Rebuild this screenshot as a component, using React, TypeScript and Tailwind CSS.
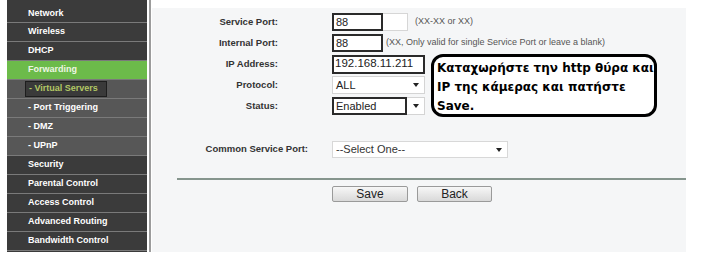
import React from 'react';

const Arrow: React.FC = () => (
  <svg width="6" height="4" viewBox="0 0 6 4" className="shrink-0">
    <path d="M0 0 L6 0 L3 4 Z" fill="#222" />
  </svg>
);

type MenuItem = { label: string; sub?: boolean; active?: boolean; selected?: boolean };

const menu: MenuItem[] = [
  { label: 'Wireless' },
  { label: 'DHCP' },
  { label: 'Forwarding', active: true },
  { label: '- Virtual Servers', sub: true, selected: true },
  { label: '- Port Triggering', sub: true },
  { label: '- DMZ', sub: true },
  { label: '- UPnP', sub: true },
  { label: 'Security' },
  { label: 'Parental Control' },
  { label: 'Access Control' },
  { label: 'Advanced Routing' },
  { label: 'Bandwidth Control' },
];

const Sidebar: React.FC = () => (
  <div className="w-[140px] h-[252px] overflow-hidden flex flex-col bg-[#3b3b3b] text-[9px] font-bold text-white">
    <div className="h-[22px] shrink-0 flex items-center pt-[6px] pl-[21px] bg-[#3b3b3b]">Network</div>
    {menu.map((m) => {
      const bg = m.active ? 'bg-[#6cbb4a]' : m.sub ? 'bg-[#575757]' : 'bg-[#3b3b3b]';
      return (
        <div key={m.label} className={`h-[19px] shrink-0 border-t border-[#7a7a7a] flex items-center ${bg}`}>
          {m.selected ? (
            <div className="ml-[18px] w-[82px] h-[16px] flex items-center pl-[3px] bg-[#3a3a3a] border border-[#1e1e1e] text-[#b3c865]">
              {m.label}
            </div>
          ) : (
            <span className={`pl-[21px] ${m.active ? 'text-[#eef6e4]' : ''}`}>{m.label}</span>
          )}
        </div>
      );
    })}
    <div className="h-[4px] shrink-0 border-t border-[#7a7a7a]" />
  </div>
);

const Label: React.FC<{ children: React.ReactNode }> = ({ children }) => (
  <div className="w-[126px] text-right text-[9.5px] font-bold text-[#333]">{children}</div>
);

const Form: React.FC = () => (
  <div className="flex flex-col gap-[3px] pt-[5px]">
    <div className="h-[18px] flex items-center">
      <Label>Service Port:</Label>
      <div className="ml-[54px] w-[51px] h-[18px] border-2 border-[#2a2a2a] bg-white text-[11px] text-[#222] pl-[2px] flex items-center">88</div>
      <div className="w-[25px] h-[18px] border border-[#d6d6d6] border-l-0 bg-white" />
      <span className="ml-[7px] text-[9px] text-[#555]">(XX-XX or XX)</span>
    </div>
    <div className="h-[18px] flex items-center">
      <Label>Internal Port:</Label>
      <div className="ml-[54px] w-[51px] h-[18px] border-2 border-[#2a2a2a] bg-white text-[11px] text-[#222] pl-[2px] flex items-center">88</div>
      <span className="ml-[3px] text-[9px] text-[#555]">(XX, Only valid for single Service Port or leave a blank)</span>
    </div>
    <div className="h-[18px] flex items-center">
      <Label>IP Address:</Label>
      <div className="ml-[54px] w-[93px] h-[19px] border-2 border-[#2a2a2a] bg-white text-[11.5px] text-[#222] pl-[1px] flex items-center whitespace-nowrap overflow-hidden">192.168.11.211</div>
    </div>
    <div className="h-[18px] flex items-center">
      <Label>Protocol:</Label>
      <div className="ml-[54px] w-[93px] h-[18px] border border-[#d4d4d4] bg-white text-[11px] text-[#222] pl-[3px] pr-[5px] flex items-center justify-between">
        <span>ALL</span>
        <Arrow />
      </div>
    </div>
    <div className="h-[18px] flex items-center">
      <Label>Status:</Label>
      <div className="ml-[54px] w-[75px] h-[18px] border-2 border-[#2a2a2a] bg-white text-[11px] text-[#222] pl-[2px] flex items-center">Enabled</div>
      <div className="w-[18px] h-[18px] border border-[#d4d4d4] border-l-0 bg-white flex items-center justify-center">
        <Arrow />
      </div>
    </div>
  </div>
);

export default function App() {
  return (
    <div className="relative w-[701px] h-[259px] bg-white flex pl-[7px] overflow-hidden" style={{ fontFamily: '"Liberation Sans", Arial, sans-serif' }}>
      <Sidebar />
      <div className="w-[2px]" />
      <div className="w-[2px] h-[252px] bg-[#9c9c9c]" />
      <div className="w-[1px]" />
      <div className="mt-[8px] w-[534px] h-[244px] bg-[#f5f6f7] flex flex-col">
        <Form />
        <div className="mt-[26px] h-[17px] flex items-center">
          <div className="w-[156px] text-right text-[9.5px] font-bold text-[#333]">Common Service Port:</div>
          <div className="ml-[24px] w-[176px] h-[17px] border border-[#d8d8d8] bg-white text-[11px] text-[#333] pl-[3px] pr-[5px] flex items-center justify-between">
            <span>--Select One--</span>
            <Arrow />
          </div>
        </div>
        <div className="mt-[20px] ml-[25px] h-[2px] bg-[#85958d]" />
        <div className="mt-[6px] ml-[180px] flex gap-[9px]">
          <button className="w-[76px] h-[16px] rounded-[2px] border border-[#9a9a9a] bg-gradient-to-b from-[#f7f7f7] to-[#d9d9d9] text-[12px] leading-none text-[#222]">Save</button>
          <button className="w-[75px] h-[16px] rounded-[2px] border border-[#9a9a9a] bg-gradient-to-b from-[#f7f7f7] to-[#d9d9d9] text-[12px] leading-none text-[#222]">Back</button>
        </div>
      </div>

      {/* annotation callout drawn over the form */}
      <div
        className="absolute left-[431px] top-[54px] w-[226px] h-[63px] rounded-[12px] border-[3px] border-black bg-white pl-[3px] pt-[2px] text-[12px] font-bold leading-[19px] text-black whitespace-nowrap"
        style={{ fontFamily: '"DejaVu Sans", Verdana, sans-serif' }}
      >
        Καταχωρήστε την http θύρα και
        <br />
        IP της κάμερας και πατήστε
        <br />
        Save.
      </div>
    </div>
  );
}
